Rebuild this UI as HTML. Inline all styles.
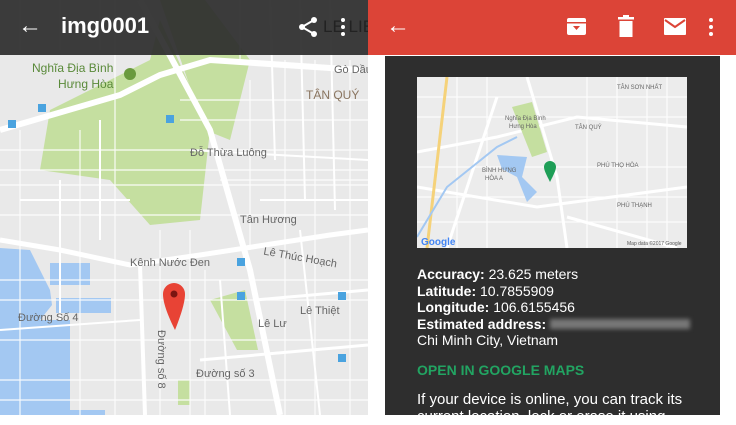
<!DOCTYPE html>
<html><head><meta charset="utf-8"><style>
*{margin:0;padding:0;box-sizing:border-box}
body{width:736px;height:415px;overflow:hidden;position:relative;background:#fff;font-family:"Liberation Sans","Noto Sans CJK SC",sans-serif}
.l{position:absolute;left:0;top:0;width:368px;height:415px;overflow:hidden;background:#e9e9e9}
.r{position:absolute;left:368px;top:0;width:368px;height:415px;background:#fff}
.t{position:absolute;font-size:11px;color:#666;white-space:nowrap}
</style></head><body>
<div class="l">
<svg width="368" height="415" style="position:absolute;left:0;top:0">
<g fill="#c5dfa0">
<polygon points="50,110 150,60 160,20 210,130 200,220 150,225 110,180 40,170"/>
<polygon points="160,0 205,0 250,60 230,140 205,130"/>
<polygon points="210,300 245,290 258,350 237,350"/>
<polygon points="178,380 190,380 190,405 178,405"/>
</g>
<g fill="#a3c8f2">
<polygon points="0,248 30,250 50,290 52,305 40,320 40,415 0,415"/>
<rect x="50" y="263" width="40" height="22"/>
<rect x="56" y="298" width="55" height="15"/>
<path d="M40,320 h30 v90 h35 v5 h-70z"/>
</g>
<g stroke="#fff" fill="none" stroke-width="1.2" opacity=".9">
<path d="M0,150 H368 M0,170 H368 M0,185 H368 M0,215 H368 M0,280 H368 M0,300 H368 M0,340 H368 M0,380 H368 M0,400 H368 M180,100 H368 M180,120 H368 M220,180 H368"/>
<path d="M20,130 V415 M80,130 V415 M115,0 V415 M160,230 V415 M190,230 V415 M205,270 V415 M250,80 V250 M285,60 V415 M315,60 V415 M350,60 V415 M240,0 V60 M20,0 V50 M60,0 V50 M100,0 V50"/>
</g>
<g stroke="#fff" fill="none">
<path d="M0,130 L120,95 L160,75 L210,60 L360,70" stroke-width="6"/>
<path d="M140,0 L210,130 L250,270 L280,415" stroke-width="6"/>
<path d="M0,240 L60,250 L130,265 L200,255 L330,235 L368,230" stroke-width="5"/>
<path d="M140,265 L145,415" stroke-width="4"/>
<path d="M200,360 L368,345" stroke-width="3"/>
<path d="M255,300 L368,290" stroke-width="3"/>
<path d="M270,0 L275,160 M300,0 L305,200 M330,0 L335,210 M0,330 L140,320 M260,200 L368,200 M190,150 L368,160 M100,120 L100,240 M60,180 L60,320 M220,280 L230,415 M300,230 L320,415 M20,200 L130,200" stroke-width="2"/>
</g>
<g fill="#4aa3df"><rect x="38" y="104" width="8" height="8"/><rect x="8" y="120" width="8" height="8"/><rect x="166" y="115" width="8" height="8"/><rect x="237" y="258" width="8" height="8"/><rect x="237" y="292" width="8" height="8"/><rect x="338" y="292" width="8" height="8"/><rect x="338" y="354" width="8" height="8"/></g>
<circle cx="130" cy="74" r="6" fill="#6a9a3e"/>
<path d="M175,330 C165,310 163,300 163,294 A11,11 0 0 1 185,294 C185,300 183,310 175,330Z" fill="#e84335"/>
<circle cx="174" cy="294" r="3.5" fill="#7a1511"/>
</svg>
<div class="t" style="left:32px;top:60px;color:#5a8a3a;font-size:12px;line-height:16px;text-align:right">Nghĩa Địa Bình<br>Hưng Hòa</div>
<div class="t" style="left:334px;top:64px">Gò Dầu</div>
<div class="t" style="left:306px;top:88px;font-size:12px;color:#8a7560">TÂN QUÝ</div>
<div class="t" style="left:190px;top:147px">Đỗ Thừa Luông</div>
<div class="t" style="left:240px;top:214px">Tân Hương</div>
<div class="t" style="left:130px;top:257px">Kênh Nước Đen</div>
<div class="t" style="left:263px;top:252px;transform:rotate(10deg)">Lê Thúc Hoạch</div>
<div class="t" style="left:18px;top:312px">Đường Số 4</div>
<div class="t" style="left:300px;top:305px">Lê Thiệt</div>
<div class="t" style="left:258px;top:318px">Lê Lư</div>
<div class="t" style="left:196px;top:368px">Đường số 3</div>
<div class="t" style="left:167px;top:330px;transform:rotate(90deg);transform-origin:left top">Đường số 8</div>
<div style="position:absolute;left:0;top:0;width:368px;height:55px;background:rgba(45,45,45,.93)"></div>
<div style="position:absolute;left:18px;top:12px;color:#fff;font-size:24px">←</div>
<div style="position:absolute;left:61px;top:13px;color:#fff;font-size:22px;font-weight:bold">img0001</div>
<div style="position:absolute;left:323px;top:17px;color:#222;font-size:17px;white-space:nowrap">LE LIE</div>
<svg width="24" height="24" style="position:absolute;left:296px;top:15px"><circle cx="18" cy="5" r="3" fill="#fff"/><circle cx="6" cy="12" r="3" fill="#fff"/><circle cx="18" cy="19" r="3" fill="#fff"/><path d="M18,5 L6,12 L18,19" stroke="#fff" stroke-width="2" fill="none"/></svg>
<svg width="6" height="20" style="position:absolute;left:340px;top:17px"><circle cx="3" cy="3" r="2" fill="#fff"/><circle cx="3" cy="10" r="2" fill="#fff"/><circle cx="3" cy="17" r="2" fill="#fff"/></svg>
</div>
<div class="r">
<div style="position:absolute;left:0;top:0;width:368px;height:55px;background:#dc4437"></div>
<div style="position:absolute;left:18px;top:12px;color:#fff;font-size:24px">←</div>
<svg width="20" height="20" style="position:absolute;left:199px;top:16px"><rect x="0" y="2" width="19" height="17" rx="2" fill="#fff"/><rect x="0" y="6" width="19" height="1.5" fill="#dc4437"/><path d="M6,10 L13,10 L9.5,14Z" fill="#dc4437"/></svg>
<svg width="16" height="22" style="position:absolute;left:250px;top:15px"><rect x="0" y="2" width="16" height="2.5" fill="#fff"/><rect x="5" y="0" width="6" height="3" fill="#fff"/><rect x="1.5" y="6" width="13" height="16" fill="#fff"/></svg>
<svg width="22" height="17" style="position:absolute;left:296px;top:18px"><rect x="0" y="0" width="22" height="17" rx="1" fill="#fff"/><path d="M1,2 L11,9 L21,2" stroke="#dc4437" stroke-width="2" fill="none"/></svg>
<svg width="6" height="20" style="position:absolute;left:340px;top:17px"><circle cx="3" cy="3" r="2" fill="#fff"/><circle cx="3" cy="10" r="2" fill="#fff"/><circle cx="3" cy="17" r="2" fill="#fff"/></svg>
<div style="position:absolute;left:17px;top:56px;width:335px;height:359px;background:#2e2e2e"></div>
<svg width="270" height="171" style="position:absolute;left:49px;top:77px;background:#ececec">
<g stroke="#fff" fill="none" stroke-width="1"><path d="M0,20 H270 M0,40 H270 M0,90 H270 M0,120 H270 M0,145 H270 M40,0 V171 M70,0 V171 M170,0 V171 M200,0 V171 M230,0 V171 M250,0 V171"/></g>
<g stroke="#fff" fill="none" stroke-width="3"><path d="M0,75 L80,60 L160,40 L270,50"/><path d="M110,0 L140,100 L150,171"/><path d="M0,110 L120,130 L270,110"/><path d="M30,171 L80,20"/><path d="M150,140 L260,171"/></g>
<path d="M30,0 L10,171" stroke="#f5d27a" stroke-width="3"/>
<path d="M0,160 L30,110 L80,70 L100,60" stroke="#a3c8f2" stroke-width="2" fill="none"/>
<polygon points="95,30 115,25 130,75 115,80" fill="#c5dfa0"/>
<polygon points="80,78 110,80 105,100 120,115 110,125 100,100 85,92" fill="#a3c8f2"/>
<path d="M133,105 C129,97 127,93 127,90 A6,6 0 0 1 139,90 C139,93 137,97 133,105Z" fill="#1e9e57"/>
<text x="4" y="168" font-size="10" font-weight="bold" fill="#4285f4" font-family="Liberation Sans">Google</text>
<text x="210" y="168" font-size="5" fill="#555" font-family="Liberation Sans">Map data ©2017 Google</text>
<g font-size="6" fill="#666" font-family="Liberation Sans"><text x="200" y="12">TÂN SƠN NHẤT</text><text x="88" y="43">Nghĩa Địa Bình</text><text x="92" y="51">Hưng Hòa</text><text x="158" y="52">TÂN QUÝ</text><text x="180" y="90">PHÚ THỌ HÒA</text><text x="65" y="95">BÌNH HƯNG</text><text x="68" y="103">HÒA A</text><text x="200" y="130">PHÚ THẠNH</text></g>
</svg>
<div style="position:absolute;left:49px;top:266px;color:#fff;font-size:14px;line-height:16.5px;white-space:nowrap">
<b>Accuracy:</b> 23.625 meters<br><b>Latitude:</b> 10.7855909<br><b>Longitude:</b> 106.6155456<br><b>Estimated address:</b> <span style="display:inline-block;width:140px;height:10px;background:#777;filter:blur(2px)"></span><br>Chi Minh City, Vietnam</div>
<div style="position:absolute;left:49px;top:362px;color:#22a462;font-size:14px;font-weight:bold">OPEN IN GOOGLE MAPS</div>
<div style="position:absolute;left:49px;top:391px;color:#fff;font-size:15px;line-height:17px;white-space:nowrap">If your device is online, you can track its<br>current location, lock or erase it using</div>
</div>
</body></html>
